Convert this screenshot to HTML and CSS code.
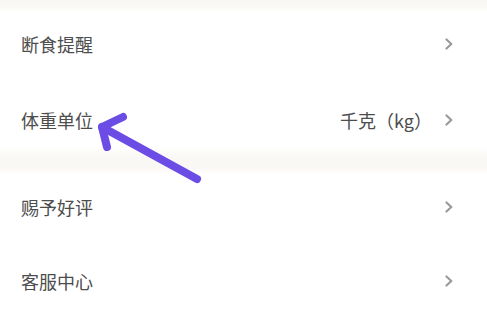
FILE: index.html
```html
<!DOCTYPE html>
<html lang="zh">
<head>
<meta charset="utf-8">
<link rel="stylesheet" href="styles.css">
</head>
<body>
<div class="page">
  <div class="top-band"></div>
  <div class="card card-first">
    <div class="row"><span class="label">断食提醒</span><span class="right"><svg class="chev" width="8" height="12" viewBox="0 0 8 12"><path d="M1.5 1.5 L6.3 6 L1.5 10.5" fill="none" stroke="#9a9a9a" stroke-width="2.2" stroke-linecap="round" stroke-linejoin="round"/></svg></span></div>
    <div class="row"><span class="label">体重单位</span><span class="right"><span class="value">千克（kg）</span><svg class="chev" width="8" height="12" viewBox="0 0 8 12"><path d="M1.5 1.5 L6.3 6 L1.5 10.5" fill="none" stroke="#9a9a9a" stroke-width="2.2" stroke-linecap="round" stroke-linejoin="round"/></svg></span></div>
  </div>
  <div class="band"></div>
  <div class="card card-second">
    <div class="row row-b"><span class="label">赐予好评</span><span class="right"><svg class="chev" width="8" height="12" viewBox="0 0 8 12"><path d="M1.5 1.5 L6.3 6 L1.5 10.5" fill="none" stroke="#9a9a9a" stroke-width="2.2" stroke-linecap="round" stroke-linejoin="round"/></svg></span></div>
    <div class="row row-b"><span class="label">客服中心</span><span class="right"><svg class="chev" width="8" height="12" viewBox="0 0 8 12"><path d="M1.5 1.5 L6.3 6 L1.5 10.5" fill="none" stroke="#9a9a9a" stroke-width="2.2" stroke-linecap="round" stroke-linejoin="round"/></svg></span></div>
  </div>
  <svg class="arrow" width="487" height="322" viewBox="0 0 487 322">
    <g fill="none" stroke="#6b4de6" stroke-width="8" stroke-linecap="round" stroke-linejoin="round">
      <path d="M197 179 L102 127"/>
      <path d="M123 117 L102 127 L107 147"/>
    </g>
  </svg>
</div>
</body>
</html>
```

FILE: styles.css
```css
html, body {
  margin: 0;
  padding: 0;
  background: #ffffff;
}
.page {
  position: relative;
  width: 487px;
  height: 322px;
  overflow: hidden;
  font-family: "Noto Sans CJK SC", "Noto Sans", sans-serif;
  color: #4d4d4d;
}
.top-band {
  height: 6px;
  background: #faf8f5;
}
.card-first {
  background: linear-gradient(to bottom, #faf8f5 0px, #ffffff 6px, #ffffff calc(100% - 12px), #faf8f5 100%);
}
.band {
  height: 10px;
  background: #faf8f5;
}
.card-second {
  padding-top: 2px;
  background: linear-gradient(to bottom, #faf8f5 0px, #ffffff 6px);
}
.row {
  height: 76px;
  display: flex;
  align-items: center;
  justify-content: space-between;
  padding: 0 34px 0 21px;
}
.row-b {
  height: 74px;
}
.label {
  font-size: 18px;
  line-height: 24px;
}
.right {
  display: flex;
  align-items: center;
}
.value {
  font-size: 18px;
  line-height: 24px;
  margin-right: 13px;
}
.chev {
  display: block;
}
.arrow {
  position: absolute;
  left: 0;
  top: 0;
  pointer-events: none;
}
```
